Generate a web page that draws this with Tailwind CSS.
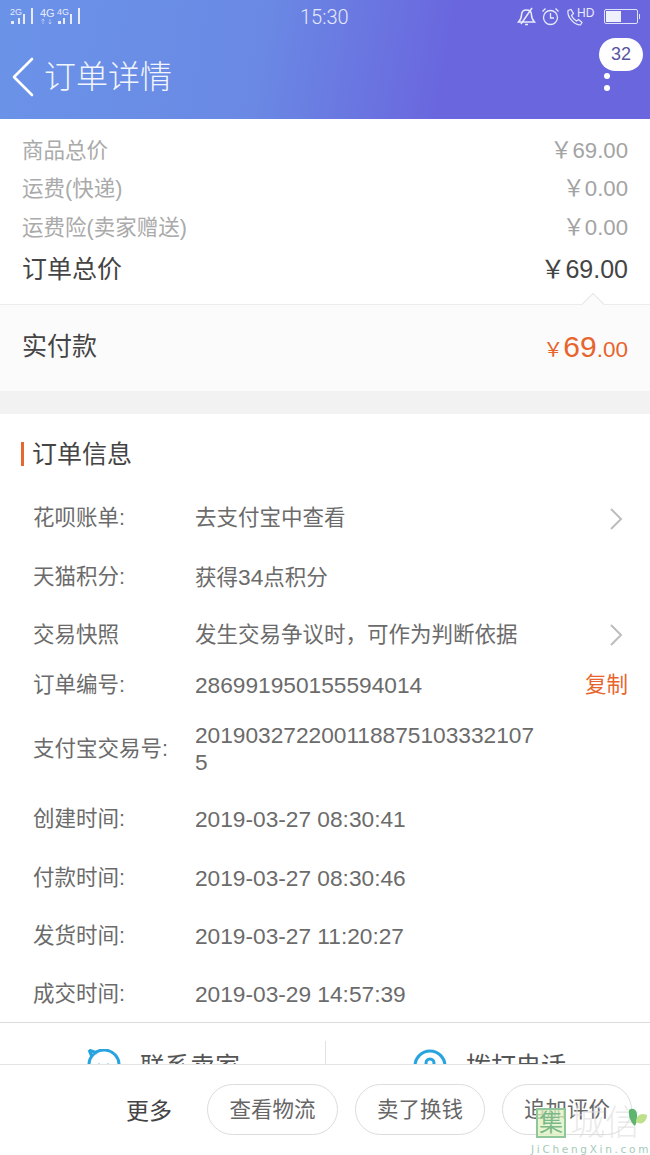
<!DOCTYPE html>
<html lang="zh">
<head>
<meta charset="utf-8">
<script src="https://cdn.jsdelivr.net/npm/@tailwindcss/browser@4"></script>
</head>
<body class="m-0 bg-white">
<div class="relative w-[650px] h-[1155px] overflow-hidden bg-white font-['Liberation_Sans','Noto_Sans_CJK_SC',sans-serif] text-[#666]">

  <header class="h-[119px] bg-[linear-gradient(100deg,#6a93e8_0%,#6a89e4_40%,#6a67de_68%)] text-white relative">
    <div class="h-[31px] relative text-[#e8ebfb]">
      <svg class="absolute left-0 top-0" width="90" height="30" viewBox="0 0 90 30" fill="currentColor">
        <rect x="11" y="21" width="3" height="3"/><rect x="18" y="18" width="2" height="6"/><rect x="23" y="14" width="2" height="10"/><rect x="31" y="8" width="2" height="16"/>
        <rect x="58" y="21" width="3" height="3"/><rect x="63" y="18" width="2" height="6"/><rect x="70" y="14" width="2" height="10"/><rect x="78" y="8" width="2" height="16"/>
        <path d="M43 19v5M41.500 20.500l1.500-1.500 1.500 1.500M50 19v5M48.500 22.500l1.500 1.500 1.500-1.500" stroke="currentColor" stroke-opacity=".55" fill="none"/>
      </svg>
      <span class="absolute left-[10px] top-[7px] text-[9px] leading-[10px]">2G</span>
      <span class="absolute left-[40px] top-[7px] text-[11px] leading-[12px]">4G</span>
      <span class="absolute left-[57px] top-[7px] text-[9px] leading-[10px]">4G</span>
      <span class="absolute left-[300px] top-[6px] text-[20px] leading-[23px] font-['Roboto'] font-light text-[#e5e8fa]">15:30</span>
      <svg class="absolute left-[517px] top-[7px]" width="19" height="19" viewBox="0 0 19 19" fill="none" stroke="currentColor" stroke-width="1.500"><path d="M1.500 15h16c-2-2-3-3-3-7 0-3-2-5-5-5S4.500 5 4.500 8c0 4-1 5-3 7zM8 17.500h3M4 17L15 1"/></svg>
      <svg class="absolute left-[541px] top-[7px]" width="19" height="19" viewBox="0 0 19 19" fill="none" stroke="currentColor" stroke-width="1.300"><circle cx="9.500" cy="10.500" r="7"/><path d="M9.500 6v5h3.500M1.500 4.500l3-3M17.500 4.500l-3-3"/></svg>
      <svg class="absolute left-[566px] top-[8px]" width="18" height="18" viewBox="0 0 18 18" fill="none" stroke="currentColor" stroke-width="1.200"><path d="M2 2.500l3-1 2.500 4-2 2c1 2.500 2.500 4 5 5.500l2-1.500 3.500 3-1.500 2.500C8 17 1 9 2 2.500z"/></svg>
      <span class="absolute left-[577px] top-[7px] text-[12px] leading-[13px]">HD</span>
      <div class="absolute left-[604px] top-[9px] w-[34px] h-[15px] border border-[#dfe3f8] rounded-[2px] p-[1px]"><div class="w-[15px] h-full bg-[#eef0fb]"></div></div>
      <div class="absolute left-[639px] top-[14px] w-[1px] h-[5px] bg-[#dfe3f8]"></div>
    </div>
    <div class="h-[92px] flex items-center">
      <svg class="ml-[10px] shrink-0" width="26" height="42" viewBox="0 0 26 42" fill="none" stroke="#fff" stroke-width="2.600" stroke-linecap="round" stroke-linejoin="round"><path d="M22 3L4 21l18 18"/></svg>
      <h1 class="ml-[8px] text-[32px] leading-[40px] font-light text-[#f3f5fd]">订单详情</h1>
    </div>
    <div class="absolute left-[599px] top-[38px] w-[44px] h-[33px] rounded-full bg-white text-[#57549f] text-[18px] leading-[33px] text-center">32</div>
    <div class="absolute left-[604px] top-[73px] w-[6px] h-[6px] rounded-full bg-white"></div>
    <div class="absolute left-[604px] top-[85px] w-[6px] h-[6px] rounded-full bg-white"></div>
  </header>

  <section class="h-[185px] px-[22px] pt-[13px] text-[21.500px] text-[#aaa]">
    <div class="flex justify-between h-[38px] leading-[38px]"><span>商品总价</span><span class="text-[#a3a3a3] text-[22.200px]">￥69.00</span></div>
    <div class="flex justify-between h-[39px] leading-[38px]"><span>运费(快递)</span><span class="text-[#a3a3a3] text-[22.200px]">￥0.00</span></div>
    <div class="flex justify-between h-[38px] leading-[38px]"><span>运费险(卖家赠送)</span><span class="text-[#a3a3a3] text-[22.200px]">￥0.00</span></div>
    <div class="flex justify-between h-[40px] leading-[44px] text-[25px] text-[#444]"><span>订单总价</span><span>￥69.00</span></div>
  </section>

  <section class="relative h-[87px] border-t border-[#ececec] bg-[#fbfbfb] px-[22px] flex justify-between items-center text-[#444]">
    <span class="text-[25px] -mt-[3px]">实付款</span>
    <span class="text-[#e8642c] -mt-[4px] flex items-baseline"><span class="text-[20px]">￥</span><span class="text-[30px]">69</span><span class="text-[22.500px]">.00</span></span>
    <div class="absolute left-[585px] -top-[9px] w-[16px] h-[16px] rotate-45 bg-[#fbfbfb] border-l border-t border-[#e6e6e6]"></div>
  </section>

  <div class="h-[23px] bg-[#f2f2f2]"></div>

  <section class="pl-[33px] pr-[22px] text-[21.500px] text-[#6b6b6b]">
    <div class="relative h-[75px] flex items-center text-[25px] text-[#444]">
      <div class="absolute -left-[12px] top-[28px] w-[3px] h-[24px] bg-[#e4682f]"></div>
      <span class="pt-[6px] -ml-[1px]">订单信息</span>
    </div>
    <div class="flex items-center h-[59px]"><span class="w-[162px]">花呗账单:</span><span class="flex-1">去支付宝中查看</span>
      <svg class="mr-[5px]" width="14" height="22" viewBox="0 0 14 22" fill="none" stroke="#bdbdbd" stroke-width="2"><path d="M2 1l10 10L2 21"/></svg></div>
    <div class="flex items-center h-[58px]"><span class="w-[162px]">天猫积分:</span><span>获得<span class="text-[22.700px]">34</span>点积分</span></div>
    <div class="flex items-center h-[58px]"><span class="w-[162px]">交易快照</span><span class="flex-1">发生交易争议时，可作为判断依据</span>
      <svg class="mr-[5px]" width="14" height="22" viewBox="0 0 14 22" fill="none" stroke="#bdbdbd" stroke-width="2"><path d="M2 1l10 10L2 21"/></svg></div>
    <div class="flex items-center h-[42px]"><span class="w-[162px]">订单编号:</span><span class="flex-1 text-[22.700px]">286991950155594014</span><span class="text-[#e8642c]">复制</span></div>
    <div class="flex items-center h-[86px]"><span class="w-[162px]">支付宝交易号:</span><span class="w-[345px] break-all leading-[27px] text-[22.700px]">2019032722001188751033321075</span></div>
    <div class="flex items-center h-[58px] -mt-[2px]"><span class="w-[162px]">创建时间:</span><span class="text-[22.700px]">2019-03-27 08:30:41</span></div>
    <div class="flex items-center h-[58px] mt-[1px]"><span class="w-[162px]">付款时间:</span><span class="text-[22.700px]">2019-03-27 08:30:46</span></div>
    <div class="flex items-center h-[58px]"><span class="w-[162px]">发货时间:</span><span class="text-[22.700px]">2019-03-27 11:20:27</span></div>
    <div class="flex items-center h-[58px]"><span class="w-[162px]">成交时间:</span><span class="text-[22.700px]">2019-03-29 14:57:39</span></div>
  </section>

  <div class="absolute left-0 right-0 top-[1022px] h-[42px] bg-white border-t border-[#dcdcdc] flex overflow-hidden text-[25px] text-[#555]">
    <div class="w-[326px] mt-[18px] flex items-start gap-[19px] pl-[87px] border-r border-[#e2e2e2]">
      <svg class="shrink-0 mt-[8px]" width="34" height="32" viewBox="0 0 34 32" fill="none" stroke="#27a4e0" stroke-width="3"><path d="M2 15A15 15 0 1 1 32 17M2 19a15 15 0 0 0 2 6M2 1l3 7M2 1l8 3"/><circle cx="12" cy="16" r="1.500" fill="#27a4e0" stroke="none"/><circle cx="21" cy="16" r="1.500" fill="#27a4e0" stroke="none"/></svg>
      <span class="leading-[32px] mt-[9px]">联系卖家</span>
    </div>
    <div class="flex-1 mt-[18px] flex items-start gap-[19px] pl-[87px]">
      <svg class="shrink-0 mt-[8px]" width="34" height="32" viewBox="0 0 34 32" fill="none" stroke="#27a4e0" stroke-width="3"><circle cx="17" cy="17" r="15"/><circle cx="17" cy="14" r="4"/></svg>
      <span class="leading-[32px] mt-[9px]">拨打电话</span>
    </div>
  </div>

  <footer class="absolute left-0 right-0 top-[1064px] h-[91px] bg-white border-t border-[#e4e4e4] flex items-start pt-[19px] text-[21.500px]">
    <span class="ml-[126px] w-[81px] h-[50px] leading-[54px] text-[#444] text-[23px]">更多</span>
    <div class="w-[131px] h-[51px] rounded-full border border-[#dcdcdc] text-center leading-[51px] text-[#666]">查看物流</div>
    <div class="ml-[17px] w-[130px] h-[51px] rounded-full border border-[#dcdcdc] text-center leading-[51px] text-[#666]">卖了换钱</div>
    <div class="ml-[17px] w-[130px] h-[51px] rounded-full border border-[#dcdcdc] text-center leading-[51px] text-[#666]">追加评价</div>
  </footer>

  <div class="absolute left-[531px] top-[1104px] w-[119px] h-[51px] pointer-events-none">
    <div class="absolute left-[5px] top-[4px] w-[30px] h-[30px] bg-[#dff0c0]/75 border-2 border-[#8fc79a] text-[#7cb98a] text-[24px] leading-[25px] text-center overflow-hidden">集</div>
    <span class="absolute left-[39px] top-[-1px] text-[#dcdcdc]/60 text-[35px] leading-[40px] whitespace-nowrap font-light">城信</span>
    <svg class="absolute left-[97px] top-[4px]" width="20" height="23" viewBox="0 0 20 23"><path d="M1 2c4-3 9 0 8 8 0 3-1 6-2 8C3 15 0 8 1 2z" fill="#5fb56f"/><path d="M8 14c0-6 5-10 11-7 0 6-5 11-11 7z" fill="#bfe08a"/></svg>
    <span class="absolute left-0 top-[39px] text-[#a4cbb8] text-[10.500px] leading-[13px] tracking-[2.700px] whitespace-nowrap font-['DejaVu_Sans']">JiChengXin.com</span>
  </div>
</div>
</body>
</html>
